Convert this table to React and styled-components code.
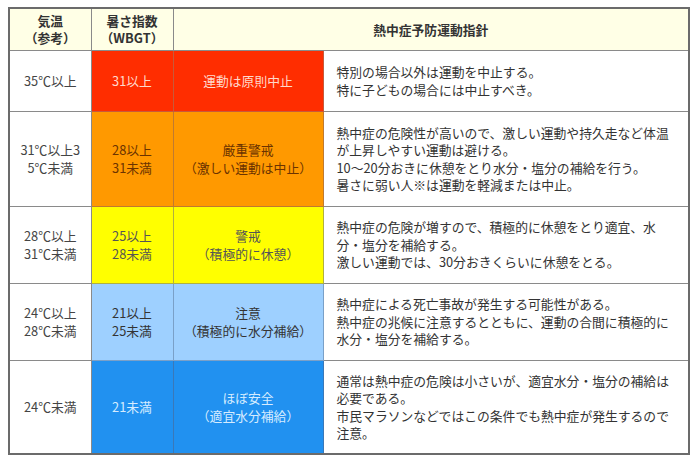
import styled, { createGlobalStyle } from 'styled-components';

const GlobalStyle = createGlobalStyle`
    body {
        margin: 0;
        background: #ffffff;
        font-family: "Noto Sans CJK JP", "Noto Sans", sans-serif;
        color: #333333;
    }
`;

const Page = styled.div`
    padding: 7px 10px 0 8px;
`;

const Table = styled.table`
    width: 682px;
    border-collapse: collapse;
    table-layout: fixed;
    border: 2px solid #6b6b6b;
    font-size: 12.8px;
    line-height: 17.5px;
`;

const HeadCell = styled.th`
    background-color: #ffffe6;
    border: 1px solid #8a8a8a;
    font-weight: bold;
    color: #333333;
    height: 40px;
    padding: 0;
    text-align: center;
    vertical-align: middle;
`;

const TempCell = styled.td`
    background: #ffffff;
    border: 1px solid #8a8a8a;
    text-align: center;
    vertical-align: middle;
    padding: 0;
    color: #444444;
`;

const LevelCell = styled.td`
    background-color: ${p => p.$bg};
    color: ${p => p.$fg};
    border: 1px solid ${p => p.$line};
    text-align: center;
    vertical-align: middle;
    padding: 0;
`;

const NoteCell = styled.td`
    background: #ffffff;
    border: 1px solid #8a8a8a;
    text-align: left;
    vertical-align: middle;
    padding: 0 0 0 13px;
    color: #333333;
    white-space: nowrap;
`;

const Row = styled.tr`
    height: ${p => p.$h}px;
`;

const levels = [
    {
        h: 61,
        temp: ['35℃以上'],
        wbgt: ['31以上'],
        label: ['運動は原則中止'],
        bg: '#ff2d00', fg: '#ffd9cc', line: '#c85a3a',
        note: ['特別の場合以外は運動を中止する。', '特に子どもの場合には中止すべき。'],
    },
    {
        h: 95,
        temp: ['31℃以上3', '5℃未満'],
        wbgt: ['28以上', '31未満'],
        label: ['厳重警戒', '（激しい運動は中止）'],
        bg: '#ff9900', fg: '#6b3300', line: '#c07a30',
        note: [
            '熱中症の危険性が高いので、激しい運動や持久走など体温',
            'が上昇しやすい運動は避ける。',
            '10～20分おきに休憩をとり水分・塩分の補給を行う。',
            '暑さに弱い人※は運動を軽減または中止。',
        ],
    },
    {
        h: 77,
        temp: ['28℃以上', '31℃未満'],
        wbgt: ['25以上', '28未満'],
        label: ['警戒', '（積極的に休憩）'],
        bg: '#ffff00', fg: '#555555', line: '#b0b040',
        note: [
            '熱中症の危険が増すので、積極的に休憩をとり適宜、水',
            '分・塩分を補給する。',
            '激しい運動では、30分おきくらいに休憩をとる。',
        ],
    },
    {
        h: 77,
        temp: ['24℃以上', '28℃未満'],
        wbgt: ['21以上', '25未満'],
        label: ['注意', '（積極的に水分補給）'],
        bg: '#9ed0ff', fg: '#333333', line: '#7aa0c8',
        note: [
            '熱中症による死亡事故が発生する可能性がある。',
            '熱中症の兆候に注意するとともに、運動の合間に積極的に',
            '水分・塩分を補給する。',
        ],
    },
    {
        h: 94,
        temp: ['24℃未満'],
        wbgt: ['21未満'],
        label: ['ほぼ安全', '（適宜水分補給）'],
        bg: '#2191f0', fg: '#d6ecff', line: '#3a78b8',
        note: [
            '通常は熱中症の危険は小さいが、適宜水分・塩分の補給は',
            '必要である。',
            '市民マラソンなどではこの条件でも熱中症が発生するので',
            '注意。',
        ],
    },
];

const Lines = ({ items }) => items.map((t, i) => (
    <span key={i}>{t}{i < items.length - 1 && <br />}</span>
));

function App() {
    return (<>
        <GlobalStyle />
        <Page>
            <Table>
                <colgroup>
                    <col style={{ width: 82 }} />
                    <col style={{ width: 82 }} />
                    <col style={{ width: 150 }} />
                    <col />
                </colgroup>
                <thead>
                    <Row $h={42}>
                        <HeadCell>気温<br />（参考）</HeadCell>
                        <HeadCell>暑さ指数<br />（WBGT）</HeadCell>
                        <HeadCell colSpan={2}>熱中症予防運動指針</HeadCell>
                    </Row>
                </thead>
                <tbody>
                    {levels.map((lv, i) => (
                        <Row key={i} $h={lv.h}>
                            <TempCell><Lines items={lv.temp} /></TempCell>
                            <LevelCell $bg={lv.bg} $fg={lv.fg} $line={lv.line}><Lines items={lv.wbgt} /></LevelCell>
                            <LevelCell $bg={lv.bg} $fg={lv.fg} $line={lv.line}><Lines items={lv.label} /></LevelCell>
                            <NoteCell><Lines items={lv.note} /></NoteCell>
                        </Row>
                    ))}
                </tbody>
            </Table>
        </Page>
    </>);
}

export default App;
